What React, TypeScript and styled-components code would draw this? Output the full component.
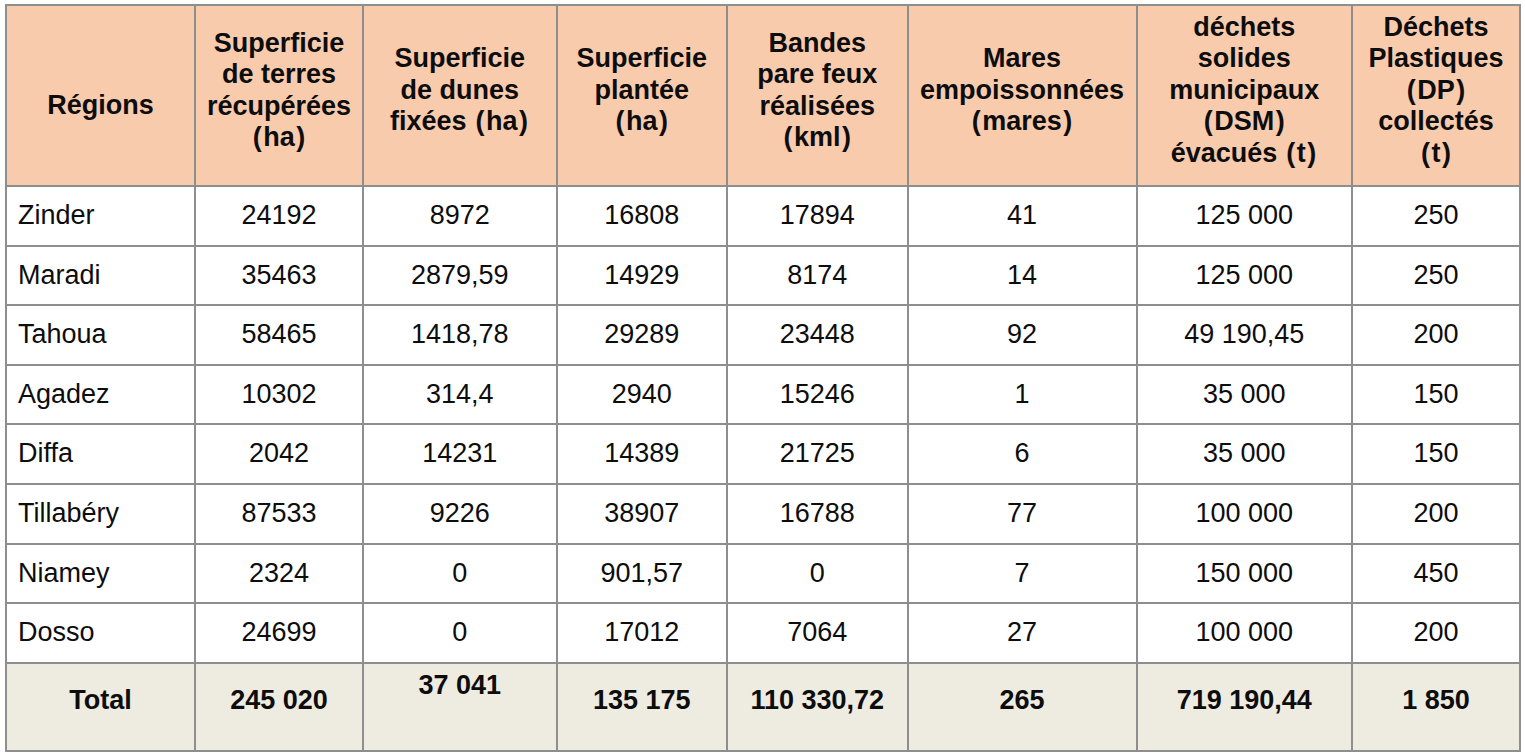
import React from "react";
import styled, { createGlobalStyle } from "styled-components";

const Global = createGlobalStyle`
  html, body { margin: 0; padding: 0; background: #ffffff; }
  body { font-family: "Liberation Sans", Arial, sans-serif; color: #0d0d0d; }
`;

const Page = styled.div`
  padding: 4px 0 0 5px;
`;

const Table = styled.table`
  border-collapse: collapse;
  table-layout: fixed;
  width: 1516px;
  font-family: "Liberation Sans", Arial, sans-serif;
  font-size: 27px;
  color: #0d0d0d;
`;

const HeadRow = styled.tr`
  height: 181px;
  background: #f8cbad;
`;

const Th = styled.th<{ $single?: boolean }>`
  border: 2px solid #8e8e8e;
  font-weight: 700;
  line-height: 31.5px;
  text-align: center;
  vertical-align: middle;
  padding: ${(p) => (p.$single ? "20px 0 0 0" : "0 0 10px 0")};
`;

const Paren = styled.span`
  margin: 0 1.5px;
`;

const BodyRow = styled.tr`
  height: 59.6px;
  background: #ffffff;
`;

const Td = styled.td<{ $left?: boolean }>`
  border: 2px solid #8e8e8e;
  text-align: ${(p) => (p.$left ? "left" : "center")};
  padding: ${(p) => (p.$left ? "0 0 0 11px" : "0")};
  vertical-align: middle;
  line-height: 31.5px;
  white-space: nowrap;
`;

const TotalRow = styled.tr`
  height: 88px;
  background: #eeebe0;
`;

const TotalCell = styled.td<{ $top?: boolean }>`
  border: 2px solid #8e8e8e;
  font-weight: 700;
  text-align: center;
  line-height: 31.5px;
  white-space: nowrap;
  vertical-align: ${(p) => (p.$top ? "top" : "middle")};
  padding: ${(p) => (p.$top ? "6px 0 0 0" : "0 0 12px 0")};
`;

const widths = [189, 168, 193.5, 170.5, 180.5, 229, 215.5, 168];

const headers: string[][] = [
  ["Régions"],
  ["Superficie", "de terres", "récupérées", "(ha)"],
  ["Superficie", "de dunes", "fixées (ha)"],
  ["Superficie", "plantée", "(ha)"],
  ["Bandes", "pare feux", "réalisées", "(kml)"],
  ["Mares", "empoissonnées", "(mares)"],
  ["déchets", "solides", "municipaux", "(DSM)", "évacués (t)"],
  ["Déchets", "Plastiques", "(DP)", "collectés", "(t)"],
];

const rows: string[][] = [
  ["Zinder", "24192", "8972", "16808", "17894", "41", "125 000", "250"],
  ["Maradi", "35463", "2879,59", "14929", "8174", "14", "125 000", "250"],
  ["Tahoua", "58465", "1418,78", "29289", "23448", "92", "49 190,45", "200"],
  ["Agadez", "10302", "314,4", "2940", "15246", "1", "35 000", "150"],
  ["Diffa", "2042", "14231", "14389", "21725", "6", "35 000", "150"],
  ["Tillabéry", "87533", "9226", "38907", "16788", "77", "100 000", "200"],
  ["Niamey", "2324", "0", "901,57", "0", "7", "150 000", "450"],
  ["Dosso", "24699", "0", "17012", "7064", "27", "100 000", "200"],
];

const totals = ["Total", "245 020", "37 041", "135 175", "110 330,72", "265", "719 190,44", "1 850"];

function renderLine(line: string) {
  const parts = line.split(/([()])/);
  return parts.map((p, i) =>
    p === "(" || p === ")" ? <Paren key={i}>{p}</Paren> : <React.Fragment key={i}>{p}</React.Fragment>
  );
}

export default function App() {
  return (
    <Page>
      <Global />
      <Table>
        <colgroup>
          {widths.map((w, i) => (
            <col key={i} style={{ width: `${w}px` }} />
          ))}
        </colgroup>
        <thead>
          <HeadRow>
            {headers.map((lines, i) => (
              <Th key={i} $single={i === 0}>
                {lines.map((l, j) => (
                  <React.Fragment key={j}>
                    {j > 0 && <br />}
                    {renderLine(l)}
                  </React.Fragment>
                ))}
              </Th>
            ))}
          </HeadRow>
        </thead>
        <tbody>
          {rows.map((r, i) => (
            <BodyRow key={i}>
              {r.map((c, j) => (
                <Td key={j} $left={j === 0}>
                  {c}
                </Td>
              ))}
            </BodyRow>
          ))}
          <TotalRow>
            {totals.map((t, j) => (
              <TotalCell key={j} $top={j === 2}>
                {t}
              </TotalCell>
            ))}
          </TotalRow>
        </tbody>
      </Table>
    </Page>
  );
}
